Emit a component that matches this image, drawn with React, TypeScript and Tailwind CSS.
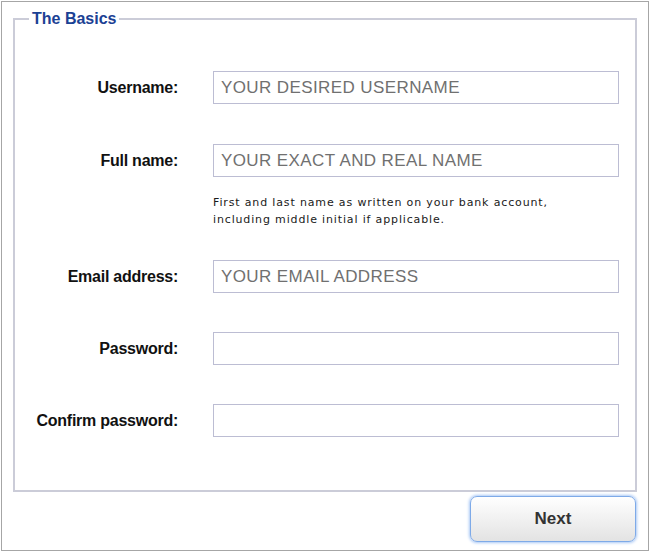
import type { ReactNode } from "react";

const labelFont = { fontFamily: '"Liberation Sans", Arial, sans-serif' };

function Row({ label, placeholder, type = "text", children }: { label: string; placeholder?: string; type?: string; children?: ReactNode }) {
  return (
    <div className="flex items-start">
      <label className="w-[163px] shrink-0 text-right text-[16px] font-bold leading-[33px] tracking-[-0.25px] text-[#111]">{label}</label>
      <div className="ml-[35px]">
        <input
          type={type}
          placeholder={placeholder}
          className="block h-[33px] w-[406px] border border-[#bcbdd3] bg-white px-[7px] text-[17px] tracking-[0.4px] text-[#333] outline-none placeholder:text-[#707070]"
        />
        {children}
      </div>
    </div>
  );
}

export default function App() {
  return (
    <div className="h-[552px] w-[650px] bg-white p-px" style={labelFont}>
      <div className="flex h-full flex-col border border-[#a6a6a6] px-[11px]">
        <fieldset className="mt-[8px] h-[482px] border-2 border-[#cbccd8] px-0 pb-0 pt-[43px]">
          <legend className="ml-[14px] px-[3px] text-[16px] font-bold leading-[18px] text-[#1b4194]">The Basics</legend>
          <div className="flex flex-col">
            <Row label="Username:" placeholder="YOUR DESIRED USERNAME" />
            <div className="mt-[40px]">
              <Row label="Full name:" placeholder="YOUR EXACT AND REAL NAME">
                <p
                  className="mt-[17px] text-[11px] leading-[17px] tracking-[0.85px] text-[#1a1a1a]"
                  style={{ fontFamily: '"DejaVu Sans", Verdana, sans-serif' }}
                >
                  First and last name as written on your bank account,
                  <br />
                  including middle initial if applicable.
                </p>
              </Row>
            </div>
            <div className="mt-[32px]">
              <Row label="Email address:" placeholder="YOUR EMAIL ADDRESS" />
            </div>
            <div className="mt-[39px]">
              <Row label="Password:" type="password" />
            </div>
            <div className="mt-[39px]">
              <Row label="Confirm password:" type="password" />
            </div>
          </div>
        </fieldset>
        <div className="mt-[4px] flex justify-end pr-[1px]">
          <button className="h-[46px] w-[166px] rounded-[7px] border border-[#7eaae8] bg-gradient-to-b from-white to-[#e3e3e3] text-[17px] font-bold text-[#333] shadow-[0_0_3px_1px_#a9c8f5]">
            Next
          </button>
        </div>
      </div>
    </div>
  );
}
